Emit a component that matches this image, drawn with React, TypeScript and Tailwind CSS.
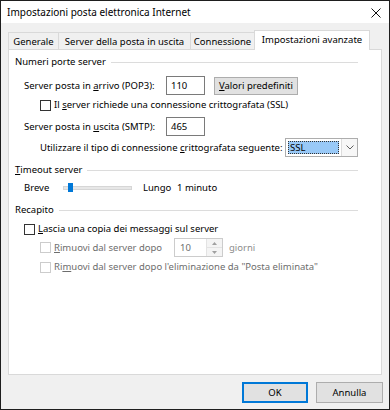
import React from 'react';

const GroupTitle = ({ children }: { children: React.ReactNode }) => (
  <div className="h-[16px] flex items-center pl-[6px] pr-[23px]">
    <span className="shrink-0">{children}</span>
    <div className="flex-1 h-px bg-[#dcdcdc] ml-[5px]" />
  </div>
);

const Check = ({ disabled }: { disabled?: boolean }) => (
  <div
    className={
      disabled
        ? 'w-[11px] h-[11px] border border-[#cccccc] bg-white shrink-0'
        : 'w-[11px] h-[11px] border border-[#333333] bg-white shrink-0'
    }
  />
);

const Tab = ({ label, className }: { label: string; className: string }) => (
  <div className={`flex items-center justify-center border-[#d9d9d9] ${className}`}>{label}</div>
);

export default function App() {
  return (
    <div className="w-[390px] h-[410px] border border-[#1e1e1e] bg-[#f0f0f0] flex flex-col text-[9.5px] leading-none text-black whitespace-nowrap font-['Noto_Sans',sans-serif]">
      {/* title bar */}
      <div className="h-[22px] bg-white flex items-center justify-between pl-[6px] pr-[8px]">
        <span className="text-[10px]">Impostazioni posta elettronica Internet</span>
        <svg width="10" height="10" viewBox="0 0 10 10" className="mt-[1px]">
          <path d="M0.5 0.5 L9.5 9.5 M9.5 0.5 L0.5 9.5" stroke="#111" strokeWidth="1" />
        </svg>
      </div>

      {/* tabs */}
      <div className="mt-[7px] h-[20px] flex items-end pl-[7px] relative z-10">
        <Tab label="Generale" className="w-[51px] h-[18px] border border-b-0" />
        <Tab label="Server della posta in uscita" className="w-[132px] h-[18px] border border-l-0 border-b-0" />
        <Tab label="Connessione" className="w-[63px] h-[18px] border-t border-b-0" />
        <Tab label="Impostazioni avanzate" className="w-[116px] h-[20px] border border-b-0 bg-white pb-[2px]" />
      </div>

      {/* panel */}
      <div className="-mt-px ml-[7px] w-[374px] h-[326px] border border-[#d9d9d9] bg-white flex flex-col">
        <div className="mt-[4px]">
          <GroupTitle>Numeri porte server</GroupTitle>
        </div>

        <div className="mt-[6px] h-[19px] flex items-center pl-[15px]">
          <span className="w-[142px] shrink-0">
            Server posta in <span className="underline">a</span>rrivo (POP3):
          </span>
          <div className="w-[39px] h-[19px] border border-[#7a7a7a] flex items-center pl-[4px]">110</div>
          <div className="ml-[9px] w-[84px] h-[18px] border border-[#adadad] bg-[#e1e1e1] flex items-center justify-center">
            <span>
              <span className="underline">V</span>alori predefiniti
            </span>
          </div>
        </div>

        <div className="mt-[2px] h-[16px] flex items-center pl-[31px] gap-[3px]">
          <Check />
          <span>
            Il <span className="underline">s</span>erver richiede una connessione crittografata (SSL)
          </span>
        </div>

        <div className="mt-[4px] h-[19px] flex items-center pl-[15px]">
          <span className="w-[142px] shrink-0">
            Server posta in <span className="underline">u</span>scita (SMTP):
          </span>
          <div className="w-[39px] h-[19px] border border-[#7a7a7a] flex items-center pl-[4px]">465</div>
        </div>

        <div className="mt-[2px] h-[19px] flex items-center pl-[31px]">
          <span className="w-[245px] shrink-0">
            Utilizzare il tipo di connessione <span className="underline">c</span>rittografata seguente:
          </span>
          <div className="w-[73px] h-[19px] border border-[#adadad] flex bg-white">
            <div className="flex-1 p-[2px]">
              <div className="h-full bg-[#99c9f7] border border-dotted border-[#333] flex items-center pl-[1px]">SSL</div>
            </div>
            <div className="w-[16px] border-l border-[#dcdcdc] bg-[#f7f7f7] flex items-center justify-center">
              <svg width="8" height="5" viewBox="0 0 8 5">
                <path d="M0.5 0.5 L4 4 L7.5 0.5" fill="none" stroke="#606060" strokeWidth="1" />
              </svg>
            </div>
          </div>
        </div>

        <div className="mt-[5px]">
          <GroupTitle>
            <span className="underline">T</span>imeout server
          </GroupTitle>
        </div>

        <div className="mt-[2px] h-[16px] flex items-center pl-[15px]">
          <span className="w-[39px] shrink-0">Breve</span>
          <div className="relative w-[69px] h-[4px] shrink-0 border border-[#d6d6d6] bg-[#e7e7e7]">
            <div className="absolute left-[4px] -top-[4px] w-[5px] h-[9px] bg-[#0078d7]" />
          </div>
          <span className="ml-[11px] w-[34px] shrink-0">Lungo</span>
          <span>1 minuto</span>
        </div>

        <div className="mt-[6px]">
          <GroupTitle>Recapito</GroupTitle>
        </div>

        <div className="mt-[3px] h-[16px] flex items-center pl-[15px] gap-[3px]">
          <Check />
          <span>
            <span className="underline">L</span>ascia una copia dei messaggi sul server
          </span>
        </div>

        <div className="mt-[1px] h-[19px] flex items-center pl-[31px] text-[#6d6d6d]">
          <Check disabled />
          <span className="ml-[3px] w-[120px] shrink-0">
            <span className="underline">R</span>imuovi dal server dopo
          </span>
          <div className="w-[49px] h-[19px] border border-[#cccccc] flex bg-white">
            <div className="flex-1 flex items-center pl-[5px]">10</div>
            <div className="w-[16px] flex flex-col border-l border-[#e3e3e3]">
              <div className="flex-1 flex items-center justify-center border-b border-[#e3e3e3] bg-[#f4f4f4]">
                <svg width="5" height="3" viewBox="0 0 5 3">
                  <path d="M2.5 0 L5 3 L0 3 Z" fill="#a0a0a0" />
                </svg>
              </div>
              <div className="flex-1 flex items-center justify-center bg-[#f4f4f4]">
                <svg width="5" height="3" viewBox="0 0 5 3">
                  <path d="M0 0 L5 0 L2.5 3 Z" fill="#a0a0a0" />
                </svg>
              </div>
            </div>
          </div>
          <span className="ml-[6px] text-[#8c8c8c]">giorni</span>
        </div>

        <div className="mt-[2px] h-[16px] flex items-center pl-[31px] gap-[3px] text-[#6d6d6d]">
          <Check disabled />
          <span>
            Ri<span className="underline">m</span>uovi dal server dopo l&apos;eliminazione da &quot;Posta eliminata&quot;
          </span>
        </div>
      </div>

      {/* buttons */}
      <div className="mt-[7px] h-[21px] flex justify-end gap-[8px] pr-[6px]">
        <div className="w-[66px] h-[21px] border-2 border-[#0078d7] bg-[#e1e1e1] flex items-center justify-center">OK</div>
        <div className="w-[67px] h-[21px] border border-[#adadad] bg-[#e1e1e1] flex items-center justify-center">Annulla</div>
      </div>
    </div>
  );
}
